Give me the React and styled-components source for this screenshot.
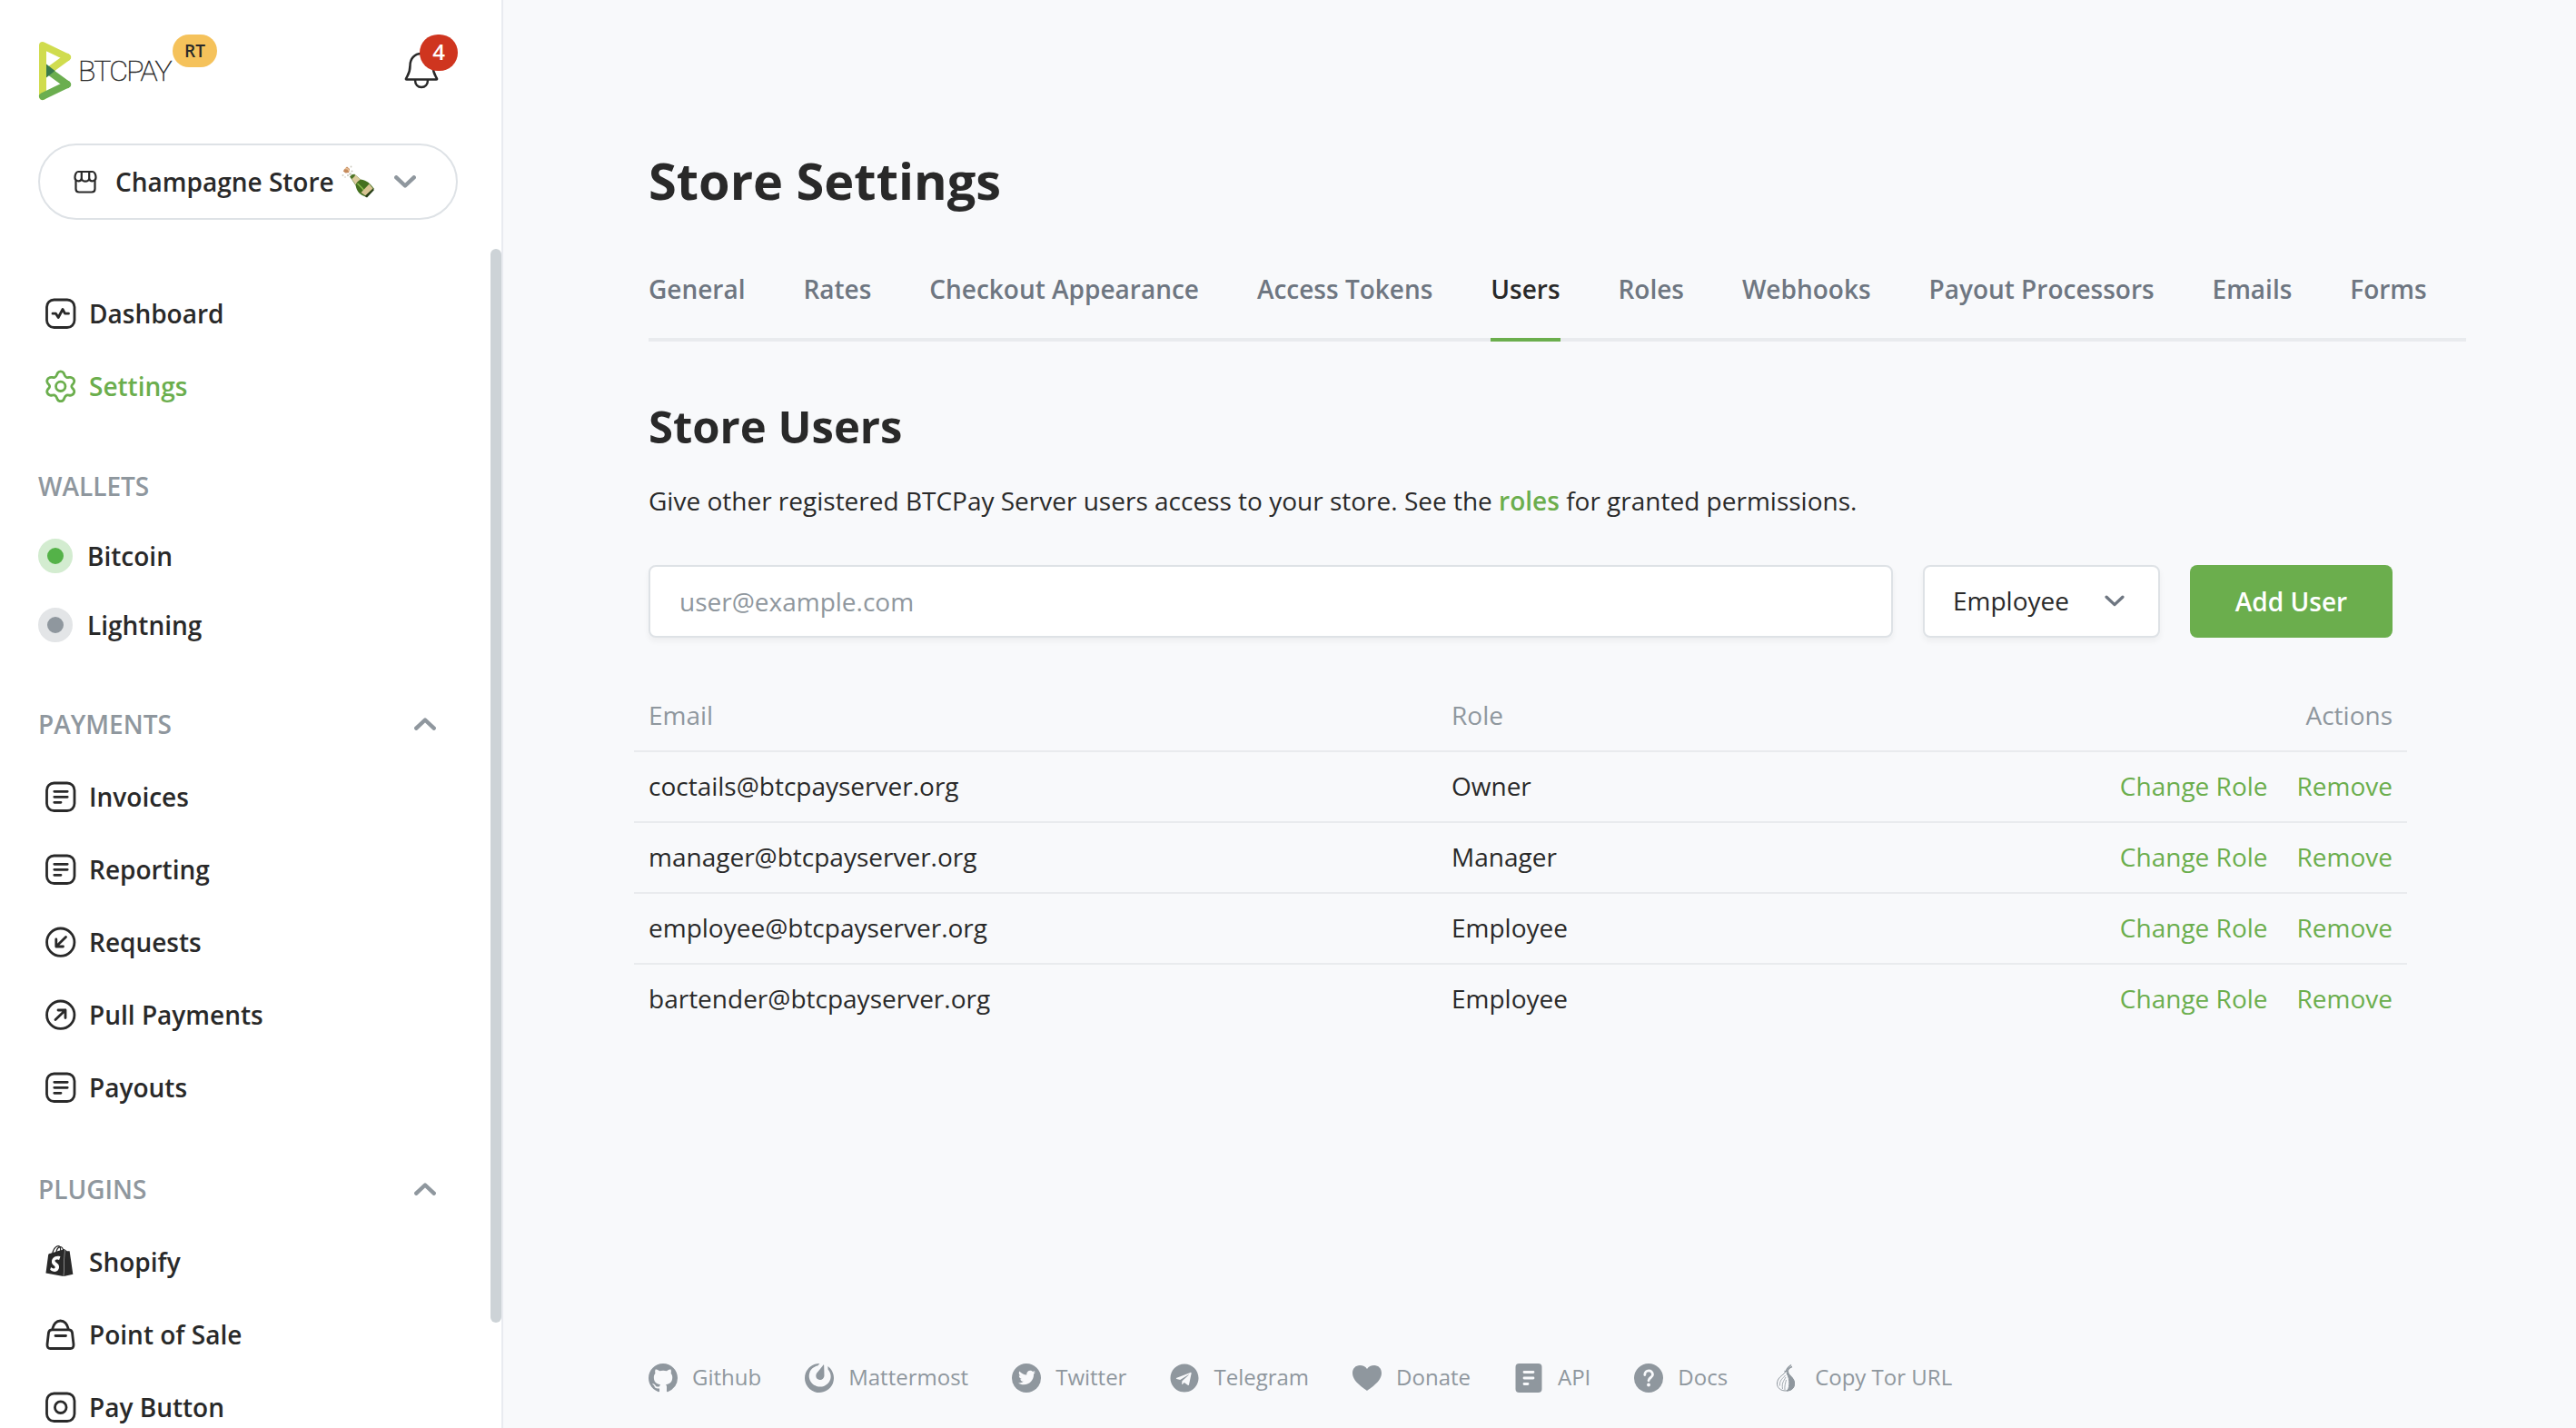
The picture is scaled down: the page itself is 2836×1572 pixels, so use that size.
import React from "react";
import styled, { createGlobalStyle } from "styled-components";
import { SiMattermost, SiShopify } from "react-icons/si";
import { FaTelegram, FaTwitter } from "react-icons/fa";

const c = {
  bg: "#f8f9fb",
  text: "#292929",
  muted: "#8f979e",
  tab: "#6e7681",
  line: "#e9ebee",
  border: "#dee2e6",
  green: "#6bae4d",
};

const Global = createGlobalStyle`
  * { box-sizing: border-box; }
  body {
    margin: 0;
    background: ${c.bg};
    color: ${c.text};
    font-family: "Open Sans", "Noto Sans", sans-serif;
    font-size: 28px;
  }
  svg { display: block; flex: none; }
`;

const Page = styled.div`
  display: flex;
  height: 1572px;
  overflow: hidden;
`;

/* ---------- sidebar ---------- */

const Sidebar = styled.aside`
  position: relative;
  flex: none;
  width: 554px;
  height: 1572px;
  overflow: hidden;
  background: #fff;
  border-right: 2px solid #e9ebf0;
  display: flex;
  flex-direction: column;
`;

const Header = styled.header`
  display: flex;
  flex: none;
  justify-content: space-between;
  align-items: flex-start;
  height: 158px;
  padding: 38px 48px 0 42px;
`;

const Brand = styled.div`
  display: flex;
  align-items: flex-start;
`;

const Wordmark = styled.span`
  width: 103px;
  margin: 23px 1px 0 7px;
  font: 100 32px/34px Roboto, sans-serif;
  -webkit-text-stroke: 0.5px ${c.text};
  letter-spacing: -1.7px;
  white-space: nowrap;
`;

const EnvBadge = styled.span`
  width: 49px;
  height: 36px;
  border-radius: 18px;
  background: #f5c25b;
  font-size: 19px;
  font-weight: 600;
  line-height: 37px;
  text-align: center;
`;

const Notifications = styled.div`
  position: relative;
  width: 60px;
  height: 62px;
  padding: 18px 0 0;
`;

const Count = styled.span`
  position: absolute;
  top: 0;
  right: 0;
  width: 42px;
  height: 40px;
  border-radius: 21px;
  background: #cf351f;
  color: #fff;
  font-size: 24px;
  font-weight: 600;
  line-height: 38px;
  text-align: center;
`;

const StoreSelector = styled.button`
  display: flex;
  align-items: center;
  flex: none;
  width: 462px;
  height: 84px;
  margin: 0 0 0 42px;
  padding: 0 44px 1px 37px;
  border: 2px solid ${c.border};
  border-radius: 42px;
  background: #fff;
  color: ${c.text};
  font: inherit;
  font-weight: 600;
`;

const StoreName = styled.span`
  margin: 0 8px 0 20px;
  white-space: nowrap;
`;

const Push = styled.span`
  margin-left: auto;
`;

const Nav = styled.nav`
  display: flex;
  flex-direction: column;
  flex: none;
  padding: 63px 0 0 42px;
`;

const NavItem = styled.a`
  display: flex;
  align-items: center;
  gap: 14.5px;
  height: 80px;
  padding-left: 6.5px;
  color: ${(p) => (p.$active ? c.green : c.text)};
  font-weight: 600;
`;

const SectionTitle = styled.div`
  display: flex;
  align-items: center;
  justify-content: space-between;
  height: 40px;
  margin: ${(p) => p.$margin};
  padding-right: 72px;
  color: ${c.muted};
  font-weight: 600;
`;

const WalletItem = styled.a`
  display: flex;
  align-items: center;
  gap: 16px;
  height: 76px;
  font-weight: 600;
`;

const Status = styled.span`
  width: 38px;
  height: 38px;
  border: 10px solid ${(p) => (p.$on ? "#d3ecd0" : "#e3e5e7")};
  border-radius: 50%;
  background: ${(p) => (p.$on ? "#54b248" : c.muted)};
`;

const ScrollThumb = styled.div`
  position: absolute;
  top: 274px;
  right: 0;
  width: 12px;
  height: 1182px;
  border-radius: 6px;
  background: #cdd3d7;
`;

/* ---------- main ---------- */

const Main = styled.main`
  flex: 1;
  display: flex;
  flex-direction: column;
  padding: 163px 121px 0 160px;
`;

const Title = styled.h1`
  margin: 0;
  font-size: 55.9px;
  font-weight: 700;
  line-height: 70px;
`;

const Tabs = styled.div`
  display: flex;
  gap: 63.9px;
  height: 77px;
  margin-top: 66px;
  box-shadow: inset 0 -4px 0 ${c.line};
`;

const Tab = styled.a`
  height: 77px;
  line-height: 38px;
  font-weight: 600;
  white-space: nowrap;
  color: ${(p) => (p.$active ? c.text : c.tab)};
  border-bottom: 4px solid ${(p) => (p.$active ? c.green : "transparent")};
`;

const Subtitle = styled.h2`
  margin: 64px 0 0;
  font-size: 49px;
  font-weight: 700;
  line-height: 58px;
`;

const Lead = styled.p`
  margin: 32px 0 0;
  line-height: 42px;
`;

const RoleLink = styled.a`
  color: ${c.green};
  font-weight: 600;
`;

const Content = styled.div`
  width: 1920px;
`;

const Form = styled.form`
  display: flex;
  gap: 33px;
  margin-top: 50px;
`;

const EmailInput = styled.input`
  width: 1370px;
  height: 80px;
  padding: 0 32px;
  border: 2px solid ${c.border};
  border-radius: 8px;
  background: #fff;
  box-shadow: 0 4px 6px rgba(41, 41, 41, 0.05);
  font: inherit;
  &::placeholder {
    color: ${c.muted};
    opacity: 1;
  }
`;

const Select = styled.div`
  display: flex;
  align-items: center;
  justify-content: space-between;
  width: 261px;
  height: 80px;
  padding: 0 37px 2px 31px;
  border: 2px solid ${c.border};
  border-radius: 8px;
  background: #fff;
  box-shadow: 0 4px 6px rgba(41, 41, 41, 0.05);
`;

const AddButton = styled.button`
  width: 223px;
  height: 80px;
  padding: 0 0 1px;
  border: 0;
  border-radius: 8px;
  background: ${c.green};
  color: #fff;
  font: inherit;
  font-weight: 600;
`;

const Table = styled.div`
  margin: 48px -16px 0;
`;

const Row = styled.div`
  display: grid;
  grid-template-columns: 884px 1fr auto;
  align-items: center;
  height: 78px;
  padding: 0 16px 2px;
  border-bottom: 2px solid ${(p) => (p.$last ? "transparent" : c.line)};
  color: ${(p) => (p.$head ? c.muted : c.text)};
`;

const Actions = styled.div`
  display: flex;
  gap: 32px;
  color: ${(p) => (p.$head ? c.muted : c.green)};
`;

const Footer = styled.footer`
  display: flex;
  gap: 48px;
  margin-top: auto;
  padding: 0 0 37px;
  color: ${c.muted};
  font-size: 24px;
  line-height: 36px;
`;

const FooterLink = styled.a`
  display: flex;
  align-items: center;
  gap: 16px;
  white-space: nowrap;
`;

const FooterLabel = styled.span`
  padding-bottom: 1px;
`;

const CircleIcon = styled.span`
  display: grid;
  place-items: center;
  width: 32px;
  height: 32px;
  border-radius: 50%;
  background: ${c.muted};
  color: ${c.bg};
`;

/* ---------- drawings ---------- */

const LogoSvg = styled.svg`
  margin-top: 8px;
`;

const Logo = () => (
  <LogoSvg width="37" height="65" viewBox="0 0 37 65" fill="none" strokeWidth="8" strokeLinecap="round" strokeLinejoin="round">
    <clipPath id="right"><rect x="9" y="0" width="28" height="65" /></clipPath>
    <path d="M5 60V4L32 17" stroke="#d0dc4e" />
    <path d="M32 17L6 36" stroke="#d0dc4e" clipPath="url(#right)" />
    <path d="M32 47L6 28" stroke="#6bae4f" clipPath="url(#right)" />
    <path d="M5 60L32 47" stroke="#6bae4f" />
    <path d="M9 24.500L18.500 32L9 39.500Z" fill="#397a4c" />
  </LogoSvg>
);

const Bell = () => (
  <svg width="40" height="42" viewBox="0 0 40 42" fill="none" stroke={c.text} strokeWidth="2.500" strokeLinejoin="round">
    <path d="M20 3C12 3 7.500 9 7.500 16C7.500 24 5.500 26 3 30.500C2.700 31.200 3 31.500 3.600 31.500H36.400C37 31.500 37.300 31.200 37 30.500C34.500 26 32.500 24 32.500 16C32.500 9 28 3 20 3Z" />
    <path d="M13 32C13 37 16 40 20 40C24 40 27 37 27 32" />
  </svg>
);

const StoreIcon = () => (
  <svg width="26" height="26" viewBox="0 0 26 26" fill="none" stroke={c.text} strokeWidth="2.200" strokeLinejoin="round">
    <path d="M5 2H21C23 2 24.500 5 24.500 8.500C24.500 13 18.500 13.500 17.200 10C16 13.500 10 13.500 8.800 10C7.500 13.500 1.500 13 1.500 8.500C1.500 5 3 2 5 2Z" />
    <path d="M8.800 10V2M17.200 10V2M2.500 12V21Q2.500 24.500 6 24.500H20Q23.500 24.500 23.500 21V12" />
  </svg>
);

const Champagne = () => (
  <svg width="36" height="36" viewBox="0 0 36 36">
    <path d="M9.500 13L14 9.500L21 15.500C28 16.500 31.500 20 35.500 25.500L27 34.500C20 32.500 17 29 15.500 22Z" fill="#44701f" />
    <path d="M17.500 20L23 25.500L27 31" stroke="#86b84a" strokeWidth="1.600" fill="none" />
    <path d="M10.500 14L15 10.500L21 15.500C18.500 17 16.500 18.500 15.700 21.500Z" fill="#dccb9c" />
    <path d="M9 12.500L12 9.800L15 11.500L11.500 15Z" fill="#4d7427" />
    <path d="M21.500 30L30.500 20.500L34.500 25.500L26.500 33.500Z" fill="#d8c393" />
    <path d="M25.500 34L35.500 25L35.500 27.500L28 35.500Z" fill="#273c17" />
    <path d="M3 4.500L6 1.500L9 4L8 8L4.500 8.500L1.800 6.500Z" fill="#c58a5c" />
    <path d="M4 3.500L7 4L8.500 6.500" stroke="#e6bd93" strokeWidth="1.500" fill="none" />
    <g fill="#c9c7bb">
      <circle cx="10.500" cy="1.500" r="0.900" />
      <circle cx="1.500" cy="11" r="0.900" />
      <circle cx="11.500" cy="6.500" r="1" />
      <circle cx="7" cy="11" r="1" />
      <circle cx="4" cy="13" r="0.800" />
      <circle cx="9.500" cy="9.500" r="1.300" />
    </g>
  </svg>
);

const Chevron = ({ up, color = c.muted, width = 24, height = 14, stroke = 4.4 }) => (
  <svg width={width} height={height} viewBox="0 0 24 14" fill="none" stroke={color} strokeWidth={stroke} strokeLinecap="round" strokeLinejoin="round">
    <path d={up ? "M2.300 11.700L12 2.500L21.700 11.700" : "M2.300 2.300L12 11.500L21.700 2.300"} />
  </svg>
);

const NavSvg = ({ children }) => (
  <svg width="35" height="36" viewBox="0 0 35 36" fill="none" stroke="currentColor" strokeWidth="2.800" strokeLinecap="round" strokeLinejoin="round">
    {children}
  </svg>
);

const Frame = () => <rect x="2.500" y="3" width="30.500" height="30.500" rx="8" />;

const DashboardIcon = () => <NavSvg><Frame /><path d="M9 18.200H12.500L15.200 22.500L20 13.500L22.500 18.200H26.500" /></NavSvg>;

const SettingsIcon = () => (
  <NavSvg>
    <path d="M14.300 3.800C15.800 1.200 19.700 1.200 21.200 3.800C22 5.500 22.200 7.800 24.300 8.500C26.300 9.200 28.200 7.600 30 8.700C32.600 9.700 33.500 12.700 32 14.800C30.800 16.300 29.800 16.900 29.800 18.300C29.800 19.700 30.800 20.300 32 21.800C33.500 23.900 32.600 26.900 30 27.900C28.200 29 26.300 27.400 24.300 28.100C22.200 28.800 22 31.100 21.200 32.800C19.700 35.400 15.800 35.400 14.300 32.800C13.500 31.100 13.300 28.800 11.200 28.100C9.200 27.400 7.300 29 5.500 27.900C2.900 26.900 2 23.900 3.500 21.800C4.700 20.300 5.700 19.700 5.700 18.300C5.700 16.900 4.700 16.300 3.500 14.800C2 12.700 2.900 9.700 5.500 8.700C7.300 7.600 9.200 9.200 11.200 8.500C13.300 7.800 13.500 5.500 14.300 3.800Z" />
    <circle cx="17.750" cy="18.300" r="5.200" />
  </NavSvg>
);

const ListIcon = () => <NavSvg><Frame /><path d="M10.800 12.300H25.200M10.800 18.300H25.200M10.800 24.300H18" /></NavSvg>;
const RequestIcon = () => <NavSvg><circle cx="17.750" cy="18.200" r="15.200" /><path d="M23.500 12.500L12.800 23M12.800 15V23H20.500" /></NavSvg>;
const PullIcon = () => <NavSvg><circle cx="17.750" cy="18.200" r="15.200" /><path d="M12 23.500L23 13M15 13H23V21.500" /></NavSvg>;
const PosIcon = () => <NavSvg><path d="M8.500 12.800H26.500Q30 12.800 30.500 16L32 29Q32.300 33.500 28.500 33.500H6.500Q2.700 33.500 3 29L4.500 16Q5 12.800 8.500 12.800ZM8.500 12.500C10 6.500 13 3 17.500 3C22 3 25 6.500 26.500 12.500M12 19.500H23.500" /></NavSvg>;
const PayIcon = () => <NavSvg><Frame /><circle cx="17.750" cy="18.200" r="6.300" /></NavSvg>;
const ShopIcon = () => <NavSvg><g stroke="none"><SiShopify x="-0.500" y="0" size="34" color={c.text} /></g></NavSvg>;

const GithubIcon = () => (
  <svg width="32" height="32" viewBox="0 0 16 16" fill={c.muted}>
    <path d="M8 0C3.580 0 0 3.580 0 8c0 3.540 2.290 6.530 5.470 7.590.4.070.550-.170.550-.380 0-.190-.010-.820-.010-1.490-2.010.370-2.530-.490-2.690-.940-.090-.230-.480-.940-.820-1.130-.280-.150-.680-.520-.010-.530.630-.010 1.080.580 1.230.820.720 1.210 1.870.870 2.330.660.070-.520.280-.870.510-1.070-1.780-.200-3.640-.890-3.640-3.950 0-.870.310-1.590.820-2.150-.080-.200-.360-1.020.080-2.120 0 0 .670-.210 2.200.820.640-.180 1.320-.270 2-.270.680 0 1.360.090 2 .270 1.530-1.040 2.200-.820 2.200-.820.440 1.100.160 1.920.080 2.120.510.560.820 1.270.820 2.150 0 3.070-1.870 3.750-3.650 3.950.290.250.540.730.540 1.480 0 1.070-.010 1.930-.010 2.200 0 .210.150.460.550.380A8.013 8.013 0 0 0 16 8c0-4.420-3.580-8-8-8z" />
  </svg>
);

const Heart = () => (
  <svg width="32" height="32" viewBox="0 0 32 32" fill={c.muted}>
    <path d="M16 30C14 28 0 20.500 0 10.500C0 5.500 3.500 2 8 2C11.500 2 14.500 3.500 16 6C17.500 3.500 20.500 2 24 2C28.500 2 32 5.500 32 10.500C32 20.500 18 28 16 30Z" />
  </svg>
);

const ApiIcon = () => (
  <svg width="32" height="32" viewBox="0 0 32 32">
    <rect x="1.500" width="29" height="32" rx="4" fill={c.muted} />
    <path d="M11 9.500H21M11 16H21M11 22.500H15" stroke={c.bg} strokeWidth="2.800" strokeLinecap="round" />
  </svg>
);

const HelpIcon = () => (
  <svg width="32" height="32" viewBox="0 0 32 32">
    <circle cx="16" cy="16" r="16" fill={c.muted} />
    <path d="M11.800 12.500C11.800 6.500 20.500 6.500 20.500 12.300C20.500 15.500 16 15.500 16 18.800" fill="none" stroke={c.bg} strokeWidth="2.800" strokeLinecap="round" />
    <circle cx="16" cy="23.500" r="1.900" fill={c.bg} />
  </svg>
);

const TorIcon = () => (
  <svg width="32" height="32" viewBox="0 0 32 32" fill="none" stroke={c.muted} strokeWidth="1">
    <path d="M15.500 8.500C16 12 6.500 14 6.500 22C6.500 27 10.500 30 16 30C21.500 30 25.500 27 25.500 22C25.500 15 18 13 18.500 8.500" />
    <path d="M17 11C21.500 17 20 29.500 17 30C22.500 30 25.500 27 25.500 22C25.500 15 18.500 13.500 18.500 9Z" fill={c.muted} />
    <path d="M14.500 8.500L19 9M16.500 8.500C16.500 5.500 18.500 4 22 1.500M18 8.500C18.500 6 20 4.500 23 3.500" strokeWidth="1.400" />
    <path d="M15.500 13C12.500 17 9 18 9.500 24.500M16 15C13.500 20 11.500 21 12.500 28M16.500 18C15.500 22 14.500 25 15 29" strokeWidth="0.800" />
  </svg>
);

/* ---------- data ---------- */

const payments = [
  ["Invoices", ListIcon],
  ["Reporting", ListIcon],
  ["Requests", RequestIcon],
  ["Pull Payments", PullIcon],
  ["Payouts", ListIcon],
];

const plugins = [
  ["Shopify", ShopIcon],
  ["Point of Sale", PosIcon],
  ["Pay Button", PayIcon],
];

const tabs = ["General", "Rates", "Checkout Appearance", "Access Tokens", "Users", "Roles", "Webhooks", "Payout Processors", "Emails", "Forms"];

const users = [
  ["coctails@btcpayserver.org", "Owner"],
  ["manager@btcpayserver.org", "Manager"],
  ["employee@btcpayserver.org", "Employee"],
  ["bartender@btcpayserver.org", "Employee"],
];

const footer = [
  ["Github", <GithubIcon />],
  ["Mattermost", <SiMattermost size={32} />],
  ["Twitter", <CircleIcon><FaTwitter size={19} /></CircleIcon>],
  ["Telegram", <FaTelegram size={32} />],
  ["Donate", <Heart />],
  ["API", <ApiIcon />],
  ["Docs", <HelpIcon />],
  ["Copy Tor URL", <TorIcon />],
];

const NavList = ({ items }) =>
  items.map(([label, Icon]) => (
    <NavItem key={label}>
      <Icon />
      {label}
    </NavItem>
  ));

export default function App() {
  return (
    <Page>
      <Global />
      <Sidebar>
        <Header>
          <Brand>
            <Logo />
            <Wordmark>BTCPAY</Wordmark>
            <EnvBadge>RT</EnvBadge>
          </Brand>
          <Notifications>
            <Bell />
            <Count>4</Count>
          </Notifications>
        </Header>
        <StoreSelector>
          <StoreIcon />
          <StoreName>Champagne Store</StoreName>
          <Champagne />
          <Push><Chevron /></Push>
        </StoreSelector>
        <Nav>
          <NavItem><DashboardIcon />Dashboard</NavItem>
          <NavItem $active><SettingsIcon />Settings</NavItem>
          <SectionTitle $margin="50px 0 19px">WALLETS</SectionTitle>
          <WalletItem><Status $on />Bitcoin</WalletItem>
          <WalletItem><Status />Lightning</WalletItem>
          <SectionTitle $margin="51px 0 20px">PAYMENTS<Chevron up /></SectionTitle>
          <NavList items={payments} />
          <SectionTitle $margin="52px 0 20px">PLUGINS<Chevron up /></SectionTitle>
          <NavList items={plugins} />
        </Nav>
        <ScrollThumb />
      </Sidebar>
      <Main>
        <Title>Store Settings</Title>
        <Tabs>
          {tabs.map((t) => (
            <Tab key={t} $active={t === "Users"}>{t}</Tab>
          ))}
        </Tabs>
        <Content>
          <Subtitle>Store Users</Subtitle>
          <Lead>
            Give other registered BTCPay Server users access to your store. See the <RoleLink>roles</RoleLink> for granted permissions.
          </Lead>
          <Form>
            <EmailInput placeholder="user@example.com" />
            <Select>
              Employee
              <Chevron color={c.tab} width={22} height={13} stroke={3.6} />
            </Select>
            <AddButton type="button">Add User</AddButton>
          </Form>
          <Table>
            <Row $head>
              <span>Email</span>
              <span>Role</span>
              <Actions $head>Actions</Actions>
            </Row>
            {users.map(([email, role], i) => (
              <Row key={email} $last={i === users.length - 1}>
                <span>{email}</span>
                <span>{role}</span>
                <Actions>
                  <span>Change Role</span>
                  <span>Remove</span>
                </Actions>
              </Row>
            ))}
          </Table>
        </Content>
        <Footer>
          {footer.map(([label, icon]) => (
            <FooterLink key={label}>
              {icon}
              <FooterLabel>{label}</FooterLabel>
            </FooterLink>
          ))}
        </Footer>
      </Main>
    </Page>
  );
}
